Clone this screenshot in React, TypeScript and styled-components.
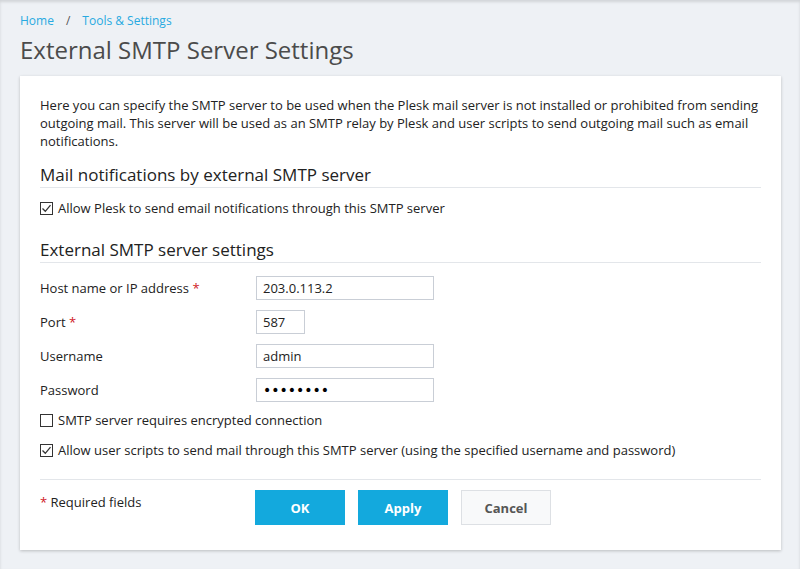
import React, { useState } from "react";
import styled, { createGlobalStyle } from "styled-components";

const GlobalStyle = createGlobalStyle`
  html, body {
    margin: 0;
    padding: 0;
    background: #eef1f5;
    font-family: "Open Sans", "Liberation Sans", sans-serif;
    font-size: 13px;
    color: #222;
  }
  * { box-sizing: border-box; }
`;

const Page = styled.div`
  min-height: 569px;
  padding: 12px 19px 0 20px;
  box-shadow: inset 0 2px 3px rgba(0, 0, 0, 0.12);
`;

const Breadcrumbs = styled.nav`
  display: flex;
  align-items: center;
  gap: 12px;
  line-height: 18px;
  font-size: 12px;
`;

const Crumb = styled.a`
  color: #28aae1;
  text-decoration: none;
  cursor: pointer;
`;

const CrumbSep = styled.span`
  color: #555;
`;

const Title = styled.h1`
  margin: 4px 0 10px;
  font-size: 24px;
  line-height: 32px;
  font-weight: 400;
  color: #4b4b4b;
`;

const Card = styled.div`
  background: #fff;
  padding: 20px 20px 25px;
  box-shadow: 0 1px 3px rgba(0, 0, 0, 0.22);
`;

const Intro = styled.p`
  margin: 0;
  line-height: 18px;
`;

const SectionTitle = styled.h2<{ $top: number }>`
  margin: ${({ $top }) => $top}px 0 0;
  padding-bottom: 1px;
  font-size: 17px;
  line-height: 22px;
  font-weight: 400;
  color: #222;
  border-bottom: 1px solid #e3e6ea;
`;

const CheckRow = styled.label<{ $top: number }>`
  display: flex;
  align-items: center;
  gap: 5px;
  margin-top: ${({ $top }) => $top}px;
  height: 20px;
  line-height: 20px;
  cursor: pointer;
`;

const Box = styled.span`
  width: 13px;
  height: 13px;
  border: 1px solid #333;
  background: #fff;
  display: flex;
  align-items: center;
  justify-content: center;
  flex-shrink: 0;
`;

const Fields = styled.div`
  display: flex;
  flex-direction: column;
  gap: 10px;
  margin-top: 13px;
`;

const FieldRow = styled.div`
  display: grid;
  grid-template-columns: 216px 1fr;
  align-items: center;
`;

const FieldLabel = styled.label`
  line-height: 18px;
`;

const Req = styled.span`
  color: #d0191f;
`;

const Input = styled.input<{ $w: number }>`
  width: ${({ $w }) => $w}px;
  height: 24px;
  padding: 0 6px;
  border: 1px solid #c9ced6;
  font-family: inherit;
  font-size: 13px;
  color: #222;
  outline: none;
  &[type="password"] {
    letter-spacing: 0;
    font-family: "DejaVu Sans", sans-serif;
    font-size: 14px;
    color: #000;
  }
`;

const Footer = styled.div`
  margin-top: 19px;
  border-top: 1px solid #e3e6ea;
  padding-top: 10px;
  display: grid;
  grid-template-columns: 215px 1fr;
  align-items: start;
`;

const RequiredNote = styled.div`
  padding-top: 3px;
  line-height: 18px;
`;

const Buttons = styled.div`
  display: flex;
  gap: 13px;
`;

const Button = styled.button<{ $primary?: boolean }>`
  width: 90px;
  height: 35px;
  border: 1px solid ${({ $primary }) => ($primary ? "#13a9dd" : "#dde0e4")};
  background: ${({ $primary }) => ($primary ? "#13a9dd" : "#f8f9fa")};
  color: ${({ $primary }) => ($primary ? "#fff" : "#555")};
  font-family: inherit;
  font-size: 13px;
  font-weight: 700;
  cursor: pointer;
`;

function Checkbox({ checked, onClick, top, children }: { checked: boolean; onClick: () => void; top: number; children: React.ReactNode }) {
  return (
    <CheckRow $top={top} onClick={onClick}>
      <Box>
        {checked && (
          <svg width="11" height="11" viewBox="0 0 11 11">
            <path d="M1.5 5.5 L4.3 8.3 L9.5 2.2" fill="none" stroke="#333" strokeWidth="1.3" />
          </svg>
        )}
      </Box>
      {children}
    </CheckRow>
  );
}

export default function App() {
  const [notify, setNotify] = useState(true);
  const [encrypted, setEncrypted] = useState(false);
  const [scripts, setScripts] = useState(true);

  return (
    <>
      <GlobalStyle />
      <Page>
        <Breadcrumbs>
          <Crumb>Home</Crumb>
          <CrumbSep>/</CrumbSep>
          <Crumb>Tools &amp; Settings</Crumb>
        </Breadcrumbs>
        <Title>External SMTP Server Settings</Title>
        <Card>
          <Intro>
            Here you can specify the SMTP server to be used when the Plesk mail server is not installed or prohibited from sending
            outgoing mail. This server will be used as an SMTP relay by Plesk and user scripts to send outgoing mail such as email
            notifications.
          </Intro>

          <SectionTitle $top={14}>Mail notifications by external SMTP server</SectionTitle>
          <Checkbox top={10} checked={notify} onClick={() => setNotify(!notify)}>
            Allow Plesk to send email notifications through this SMTP server
          </Checkbox>

          <SectionTitle $top={21}>External SMTP server settings</SectionTitle>
          <Fields>
            <FieldRow>
              <FieldLabel>
                Host name or IP address <Req>*</Req>
              </FieldLabel>
              <Input $w={178} defaultValue="203.0.113.2" />
            </FieldRow>
            <FieldRow>
              <FieldLabel>
                Port <Req>*</Req>
              </FieldLabel>
              <Input $w={49} defaultValue="587" />
            </FieldRow>
            <FieldRow>
              <FieldLabel>Username</FieldLabel>
              <Input $w={178} defaultValue="admin" />
            </FieldRow>
            <FieldRow>
              <FieldLabel>Password</FieldLabel>
              <Input $w={178} type="password" defaultValue="password" />
            </FieldRow>
          </Fields>

          <Checkbox top={8} checked={encrypted} onClick={() => setEncrypted(!encrypted)}>
            SMTP server requires encrypted connection
          </Checkbox>
          <Checkbox top={10} checked={scripts} onClick={() => setScripts(!scripts)}>
            Allow user scripts to send mail through this SMTP server (using the specified username and password)
          </Checkbox>

          <Footer>
            <RequiredNote>
              <Req>*</Req> Required fields
            </RequiredNote>
            <Buttons>
              <Button $primary>OK</Button>
              <Button $primary>Apply</Button>
              <Button>Cancel</Button>
            </Buttons>
          </Footer>
        </Card>
      </Page>
    </>
  );
}
